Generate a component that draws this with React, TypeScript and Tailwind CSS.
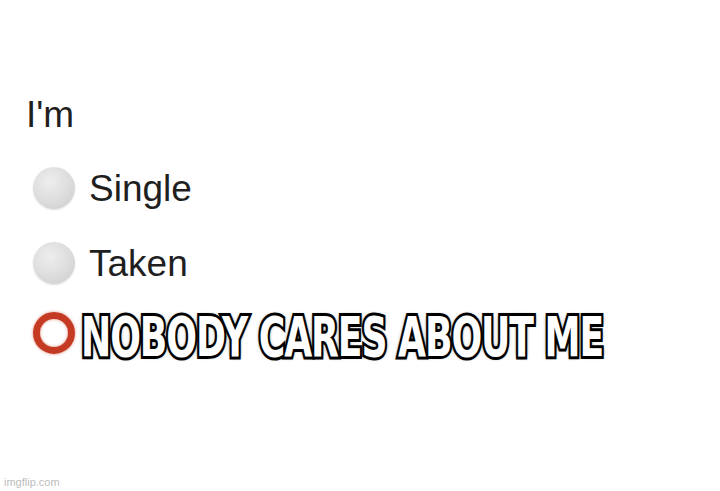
import React from "react";

function GrayDot() {
  return (
    <div className="w-[42px] h-[42px] rounded-full shrink-0 bg-[radial-gradient(circle_at_40%_35%,#eeeeee_0%,#dcdcdc_55%,#c9c9c9_100%)] shadow-[0_1px_2px_rgba(0,0,0,0.12)]" />
  );
}

export default function App() {
  return (
    <div className="w-[720px] h-[491px] bg-white relative overflow-hidden font-['Liberation_Sans',Arial,sans-serif] text-[#1f1f1f]">
      <div className="flex flex-col pl-[26px] pt-[96px]">
        <div className="text-[37px] leading-[37px] h-[37px]">I'm</div>
        <div className="flex items-center gap-[14px] mt-[34px] pl-[7px] h-[42px]">
          <GrayDot />
          <span className="text-[37px] leading-[37px]">Single</span>
        </div>
        <div className="flex items-center gap-[14px] mt-[33px] pl-[7px] h-[42px]">
          <GrayDot />
          <span className="text-[37px] leading-[37px]">Taken</span>
        </div>
        <div className="flex items-center gap-[6px] mt-[28px] pl-[7px] h-[42px]">
          <div className="w-[42px] h-[42px] rounded-full shrink-0 border-[7px] border-[#c53a22] shadow-[0_0_3px_rgba(200,60,30,0.6),inset_0_0_3px_rgba(200,60,30,0.6)]" />
          <span
            className="inline-block whitespace-nowrap origin-left scale-x-[0.718] translate-y-[4px] text-white text-[56px] leading-[56px] font-bold tracking-[-1.5px] font-['DejaVu_Sans_Condensed',sans-serif] [-webkit-text-stroke:6px_black] [paint-order:stroke_fill] [text-shadow:0_0_5px_#000,0_0_3px_#000]"
          >
            NOBODY CARES ABOUT ME
          </span>
        </div>
      </div>
      <div className="absolute left-[4px] bottom-[3px] text-[11px] leading-[12px] text-[#bdbdbd] font-['Liberation_Sans',Arial,sans-serif]">
        imgflip.com
      </div>
    </div>
  );
}
